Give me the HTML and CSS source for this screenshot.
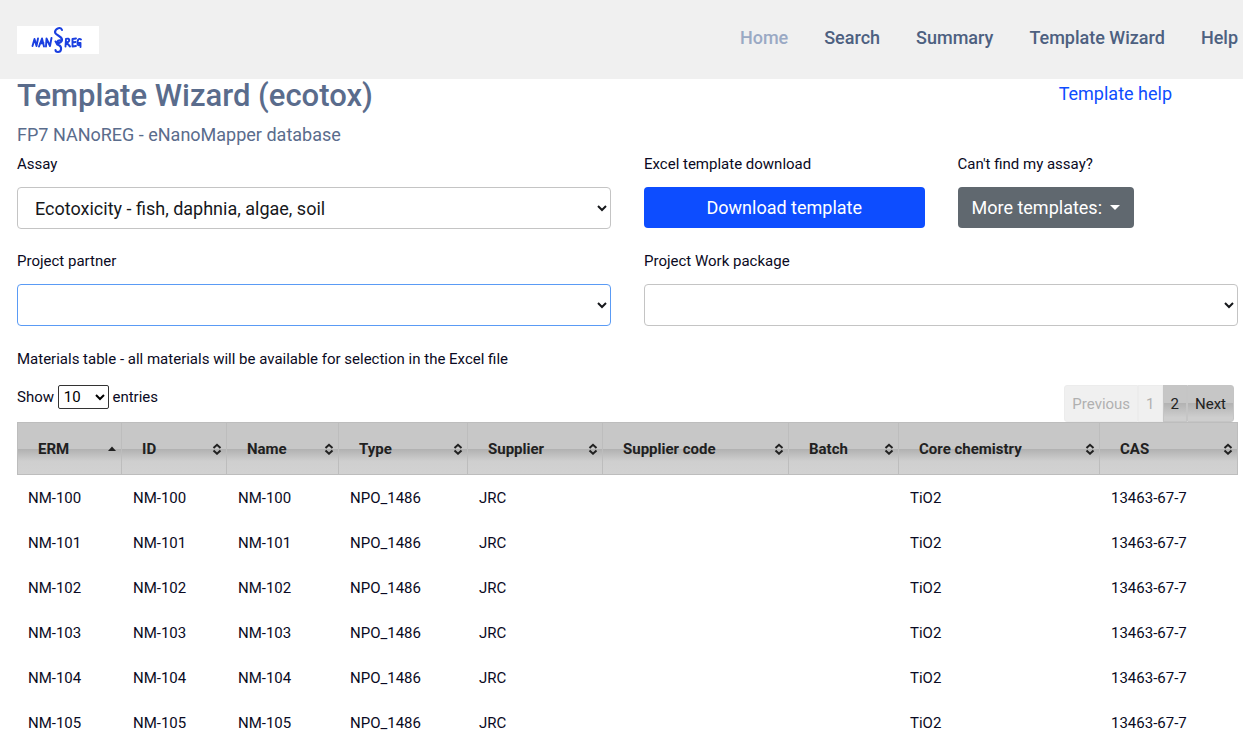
FILE: index.html
```html
<!DOCTYPE html>
<html lang="en">
<head>
    <meta charset="UTF-8">
    <meta name="viewport" content="width=device-width, initial-scale=1.0">
    <title>Template Wizard</title>
    <link rel="stylesheet" href="styles.css">
</head>
<body>
    <svg class="symbols" aria-hidden="true">
        <symbol id="sort-both" viewBox="0 0 10 12">
            <path d="M1.500 5 L5 1.800 L8.500 5 M1.500 7.500 L5 10.700 L8.500 7.500" fill="none" stroke="currentColor" stroke-width="2"/>
        </symbol>
        <symbol id="sort-asc" viewBox="0 0 10 12">
            <path d="M1 8 L5 3.500 L9 8 Z" fill="currentColor"/>
        </symbol>
    </svg>

    <header class="header">
        <a class="logo" href="#">
            <svg width="82" height="28" viewBox="0 0 82 28" role="img" aria-label="NANoREG">
                <g fill="none" stroke="#1a3fe0" stroke-width="1.9" stroke-linecap="round" stroke-linejoin="round">
                    <path d="M15.500 20 L17.500 13 L19.500 20 L21 12.500"/>
                    <path d="M22 20.500 L25 12.500 L27 20.500 M23 17.500 L26.500 17"/>
                    <path d="M29 20.500 L29.500 12.500 L33 20 L34.500 12"/>
                    <path d="M45 4 C44 0.500 38.500 2 38 6 C38 9.500 44.500 9.500 45 13.500 C45 17 39.500 18.500 38.500 15.500" stroke-width="2.100"/>
                    <path d="M44.500 14.500 C40 13.500 38 18 41.500 19 C45.500 20.500 44.500 26 41 26 C39.500 26 38.500 25 38.500 24" stroke-width="2.100"/>
                    <path d="M48.500 20.500 L49 13 C53 11.500 53.500 15.500 49.500 16.500 L53 20.500"/>
                    <path d="M59 12.500 L55.500 13 L55.500 20.500 L59 20 M55.500 16.500 L58.500 16"/>
                    <path d="M64 13.500 C61.500 11.500 60 15 60.500 18 C61 20 63 19.500 63.500 17 L61.500 17 M63.500 17 L63.500 21"/>
                </g>
            </svg>
        </a>
        <nav class="nav">
            <a class="active" href="#">Home</a>
            <a href="#">Search</a>
            <a href="#">Summary</a>
            <a href="#">Template Wizard</a>
            <a href="#">Help</a>
        </nav>
    </header>

    <main class="container">
        <div class="grid title-row">
            <div class="wide3">
                <h1>Template Wizard (ecotox)</h1>
                <p class="subheader">FP7 NANoREG - eNanoMapper database</p>
            </div>
            <a class="help-link" href="#">Template help</a>
        </div>

        <form class="grid fields">
            <div class="wide2">
                <label for="assay">Assay</label>
                <select class="control" id="assay">
                    <option>Ecotoxicity - fish, daphnia, algae, soil</option>
                </select>
            </div>
            <div>
                <label for="download">Excel template download</label>
                <button class="btn primary" id="download" type="button">Download template</button>
            </div>
            <div>
                <label for="more">Can't find my assay?</label>
                <button class="btn secondary" id="more" type="button">More templates:<span class="caret"></span></button>
            </div>
            <div class="wide2">
                <label for="partner">Project partner</label>
                <select class="control focused" id="partner">
                    <option></option>
                </select>
            </div>
            <div class="wide2">
                <label for="package">Project Work package</label>
                <select class="control" id="package">
                    <option></option>
                </select>
            </div>
        </form>

        <p class="table-title">Materials table - all materials will be available for selection in the Excel file</p>

        <div class="toolbar">
            <label class="length">Show
                <select>
                    <option>10</option>
                    <option>25</option>
                </select>
                entries</label>
            <div class="paginate">
                <button type="button" disabled>Previous</button>
                <button type="button" disabled>1</button>
                <button type="button">2</button>
                <button type="button">Next</button>
            </div>
        </div>

        <table class="materials">
            <colgroup>
                <col class="c-erm"><col class="c-id"><col class="c-name"><col class="c-type"><col class="c-supplier"><col class="c-code"><col class="c-batch"><col class="c-core"><col class="c-cas">
            </colgroup>
            <thead>
                <tr>
                    <th><div class="head">ERM<svg class="sort"><use href="#sort-asc"/></svg></div></th>
                    <th><div class="head">ID<svg class="sort"><use href="#sort-both"/></svg></div></th>
                    <th><div class="head">Name<svg class="sort"><use href="#sort-both"/></svg></div></th>
                    <th><div class="head">Type<svg class="sort"><use href="#sort-both"/></svg></div></th>
                    <th><div class="head">Supplier<svg class="sort"><use href="#sort-both"/></svg></div></th>
                    <th><div class="head">Supplier code<svg class="sort"><use href="#sort-both"/></svg></div></th>
                    <th><div class="head">Batch<svg class="sort"><use href="#sort-both"/></svg></div></th>
                    <th><div class="head">Core chemistry<svg class="sort"><use href="#sort-both"/></svg></div></th>
                    <th><div class="head">CAS<svg class="sort"><use href="#sort-both"/></svg></div></th>
                </tr>
            </thead>
            <tbody>
                <tr><td>NM-100</td><td>NM-100</td><td>NM-100</td><td>NPO_1486</td><td>JRC</td><td></td><td></td><td>TiO2</td><td>13463-67-7</td></tr>
                <tr><td>NM-101</td><td>NM-101</td><td>NM-101</td><td>NPO_1486</td><td>JRC</td><td></td><td></td><td>TiO2</td><td>13463-67-7</td></tr>
                <tr><td>NM-102</td><td>NM-102</td><td>NM-102</td><td>NPO_1486</td><td>JRC</td><td></td><td></td><td>TiO2</td><td>13463-67-7</td></tr>
                <tr><td>NM-103</td><td>NM-103</td><td>NM-103</td><td>NPO_1486</td><td>JRC</td><td></td><td></td><td>TiO2</td><td>13463-67-7</td></tr>
                <tr><td>NM-104</td><td>NM-104</td><td>NM-104</td><td>NPO_1486</td><td>JRC</td><td></td><td></td><td>TiO2</td><td>13463-67-7</td></tr>
                <tr><td>NM-105</td><td>NM-105</td><td>NM-105</td><td>NPO_1486</td><td>JRC</td><td></td><td></td><td>TiO2</td><td>13463-67-7</td></tr>
            </tbody>
        </table>
    </main>
</body>
</html>
```

FILE: styles.css
```css
* {
    box-sizing: border-box;
}
body {
    margin: 0;
    height: 100vh;
    overflow: hidden;
    font-family: Roboto, sans-serif;
    font-size: 15px;
    line-height: 24px;
    color: #0a0a23;
    background: #fff;
}
h1, p {
    margin: 0;
}
a {
    text-decoration: none;
}
.symbols {
    display: none;
}

/* header */
.header {
    display: flex;
    justify-content: space-between;
    padding: 26px 5px 25px 17px;
    background: #f0f0f0;
}
.logo {
    display: block;
    height: 28px;
    background: #fff;
}
.logo svg {
    display: block;
}
.nav {
    display: flex;
    gap: 36px;
    font-size: 18px;
    font-weight: 500;
}
.nav a {
    color: #4d6080;
}
.nav .active {
    color: #9aa9c4;
}

/* form */
.container {
    padding: 0 5px 0 17px;
}
.grid {
    display: grid;
    grid-template-columns: repeat(4, 1fr);
    column-gap: 33px;
}
.wide2 {
    grid-column: span 2;
}
.wide3 {
    grid-column: span 3;
}
h1 {
    font-size: 31px;
    font-weight: 500;
    line-height: 33px;
    color: #5a6c8c;
}
.subheader {
    margin-top: 10px;
    font-size: 18px;
    line-height: 26px;
    color: #5a6c8c;
}
.help-link {
    justify-self: end;
    padding: 3px 66px 0 0;
    font-size: 18px;
    color: #0d4dff;
}
.title-row {
    margin-bottom: 4px;
}
.fields {
    row-gap: 20px;
}
.fields label {
    display: block;
    margin-bottom: 10px;
    line-height: 25px;
}
.control {
    display: block;
    width: 100%;
    height: 42px;
    padding: 0 2px 0 13px;
    border: 1px solid #c4c4c4;
    border-radius: 4px;
    background: #fff;
    font-family: inherit;
    font-size: 18px;
    color: #16181b;
}
.focused {
    border-color: #5a9bf5;
}
.btn {
    display: block;
    height: 41px;
    padding: 0 14px;
    border: none;
    border-radius: 4px;
    font-family: inherit;
    font-size: 18px;
    color: #fff;
    cursor: pointer;
}
.primary {
    width: 100%;
    background: #0d4dff;
}
.secondary {
    display: flex;
    align-items: center;
    gap: 8px;
    background: #60686f;
}
.caret {
    border-top: 5px solid #fff;
    border-left: 5px solid transparent;
    border-right: 5px solid transparent;
}

/* table */
.table-title {
    margin-top: 21px;
}
.toolbar {
    display: flex;
    justify-content: space-between;
    padding: 14px 4px 0 0;
}
.length select {
    width: 51px;
    height: 24px;
    padding: 0 2px 0 1px;
    border: 1px solid #333;
    border-radius: 2px;
    background: #fff;
    font-family: inherit;
    font-size: 15px;
    color: #000;
}
.paginate {
    display: flex;
}
.paginate button {
    height: 37px;
    padding: 0 7px;
    border: 1px solid #c5c5c5;
    background: linear-gradient(#c6c6c6 50%, #b3b3b3 50%, #cecece 90%);
    font-family: inherit;
    font-size: 15px;
    color: #212121;
    cursor: pointer;
}
.paginate button:disabled {
    border-color: #ececec;
    background: #f0f0f0;
    color: #b0b0b0;
}
.paginate button:first-child {
    border-radius: 3px 0 0 3px;
}
.paginate button:last-child {
    border-radius: 0 3px 3px 0;
}
.materials {
    width: 100%;
    table-layout: fixed;
    border-collapse: separate;
    border-spacing: 0;
}
.c-erm, .c-id {
    width: 105px;
}
.c-name {
    width: 112px;
}
.c-type {
    width: 129px;
}
.c-supplier {
    width: 135px;
}
.c-code {
    width: 186px;
}
.c-batch {
    width: 110px;
}
.c-core {
    width: 201px;
}
.c-cas {
    width: 138px;
}
th {
    height: 53px;
    padding: 0 4px 0 20px;
    border: 1px solid #bdbdbd;
    border-left: none;
    background: linear-gradient(#c7c7c7 50%, #b1b1b1 51%, #cfcfcf 75%, #d2d2d2);
    font-weight: 700;
    text-align: left;
    color: #212121;
}
th:first-child {
    border-left: 1px solid #bdbdbd;
}
.head {
    display: flex;
    align-items: center;
    justify-content: space-between;
}
.sort {
    width: 10px;
    height: 12px;
}
td {
    height: 45px;
    padding: 0 11px;
}
```
